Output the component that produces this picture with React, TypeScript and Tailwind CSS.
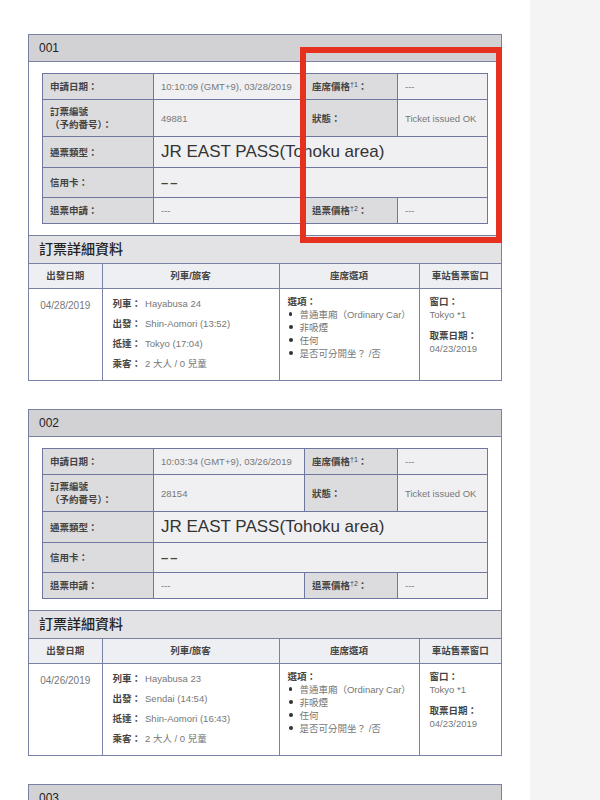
import React from 'react';

type Booking = {
  no: string;
  applied: string;
  ref: string;
  date: string;
  train: string;
  from: string;
  to: string;
};

const bookings: Booking[] = [
  {
    no: '001',
    applied: '10:10:09 (GMT+9), 03/28/2019',
    ref: '49881',
    date: '04/28/2019',
    train: 'Hayabusa 24',
    from: 'Shin-Aomori (13:52)',
    to: 'Tokyo (17:04)',
  },
  {
    no: '002',
    applied: '10:03:34 (GMT+9), 03/26/2019',
    ref: '28154',
    date: '04/26/2019',
    train: 'Hayabusa 23',
    from: 'Sendai (14:54)',
    to: 'Shin-Aomori (16:43)',
  },
  {
    no: '003',
    applied: '09:41:12 (GMT+9), 03/26/2019',
    ref: '28153',
    date: '04/24/2019',
    train: 'Hayabusa 11',
    from: 'Tokyo (10:20)',
    to: 'Sendai (11:51)',
  },
];

const font = { fontFamily: '"Liberation Sans", "Noto Sans CJK TC", sans-serif' };

const lbl = 'bg-[#dcdcde] border border-[#6d77a0] px-[7px] text-[9.5px] font-bold text-[#444] leading-[13px] align-middle';
const val = 'bg-[#f0f0f2] border border-[#6d77a0] px-[7px] text-[9.5px] text-[#777] leading-[13px] align-middle';

const Card = ({ b }: { b: Booking }) => (
  <div className="w-[474px] border border-[#7a82a4] bg-white mb-[28px]">
    {/* 標題 */}
    <div className="h-[27px] bg-[#d2d2d4] border-b border-[#7a82a4] flex items-center px-[10px] text-[12px] text-[#222]">
      {b.no}
    </div>

    {/* 基本資料 */}
    <div className="px-[13px] pt-[11px] pb-[11px]">
      <table className="w-[445px] border-collapse table-fixed">
        <colgroup>
          <col className="w-[111px]" />
          <col className="w-[151px]" />
          <col className="w-[93px]" />
          <col className="w-[90px]" />
        </colgroup>
        <tbody>
          <tr className="h-[26px]">
            <td className={lbl}>申請日期：</td>
            <td className={val}>{b.applied}</td>
            <td className={lbl}>
              座席價格<sup className="text-[7px] font-normal">†1</sup>：
            </td>
            <td className={val}>---</td>
          </tr>
          <tr className="h-[37px]">
            <td className={lbl}>
              訂票編號
              <br />
              （予約番号）：
            </td>
            <td className={val}>{b.ref}</td>
            <td className={lbl}>狀態：</td>
            <td className={val}>Ticket issued OK</td>
          </tr>
          <tr className="h-[31px]">
            <td className={lbl}>通票類型：</td>
            <td className={val} colSpan={3}>
              <span className="text-[17px] text-[#333]">JR EAST PASS(Tohoku area)</span>
            </td>
          </tr>
          <tr className="h-[30px]">
            <td className={lbl}>信用卡：</td>
            <td className={val} colSpan={3}>
              <span className="text-[13px] font-bold text-[#444] tracking-[2px]">––</span>
            </td>
          </tr>
          <tr className="h-[26px]">
            <td className={lbl}>退票申請：</td>
            <td className={val}>---</td>
            <td className={lbl}>
              退票價格<sup className="text-[7px] font-normal">†2</sup>：
            </td>
            <td className={val}>---</td>
          </tr>
        </tbody>
      </table>
    </div>

    {/* 訂票詳細資料 */}
    <div className="h-[29px] bg-[#e3e3e6] border-y border-[#7a82a4] flex items-center px-[10px] text-[14px] font-medium text-[#222]">
      訂票詳細資料
    </div>
    <table className="w-full border-collapse table-fixed">
      <colgroup>
        <col className="w-[73px]" />
        <col className="w-[177px]" />
        <col className="w-[140px]" />
        <col />
      </colgroup>
      <thead>
        <tr className="h-[24px] bg-[#eeeff3] text-[9.5px] font-bold text-[#444]">
          <th className="border-b border-[#7a82a4]">出發日期</th>
          <th className="border-b border-l border-[#7a82a4]">列車/旅客</th>
          <th className="border-b border-l border-[#7a82a4]">座席選項</th>
          <th className="border-b border-l border-[#7a82a4]">車站售票窗口</th>
        </tr>
      </thead>
      <tbody>
        <tr className="h-[92px] align-top text-[9.5px] text-[#777]">
          <td className="pt-[9px] text-center text-[10px]">{b.date}</td>
          <td className="border-l border-[#7a82a4] pt-[6px] px-[10px]">
            {[
              ['列車', b.train],
              ['出發', b.from],
              ['抵達', b.to],
              ['乘客', '2 大人 / 0 兒童'],
            ].map(([k, v]) => (
              <div key={k} className="h-[20px] flex items-center">
                <span className="text-[#444] font-bold mr-[4px]">{k}：</span>
                {v}
              </div>
            ))}
          </td>
          <td className="border-l border-[#7a82a4] pt-[6px] px-[8px] leading-[13px]">
            <div className="text-[#444] font-bold">選項：</div>
            {['普通車廂（Ordinary Car）', '非吸煙', '任何', '是否可分開坐？ /否'].map(t => (
              <div key={t} className="flex items-center">
                <span className="w-[4px] h-[4px] rounded-full bg-[#333] ml-[1px] mr-[7px]"></span>
                {t}
              </div>
            ))}
          </td>
          <td className="border-l border-[#7a82a4] pt-[6px] px-[10px] leading-[13px]">
            <div className="text-[#444] font-bold">窗口：</div>
            <div>Tokyo *1</div>
            <div className="text-[#444] font-bold mt-[8px]">取票日期：</div>
            <div>04/23/2019</div>
          </td>
        </tr>
      </tbody>
    </table>
  </div>
);

export default function App() {
  return (
    <div className="relative flex w-[600px] h-[800px] overflow-hidden" style={font}>
      <div className="w-[530px] bg-white pl-[28px] pt-[34px]">
        {bookings.map(b => (
          <Card key={b.no} b={b} />
        ))}
      </div>
      <div className="flex-1 bg-[#f4f4f4]"></div>

      {/* 標示框 */}
      <div className="absolute left-[300px] top-[47px] w-[202px] h-[196px] border-[6px] border-[#e5311e]"></div>
    </div>
  );
}
